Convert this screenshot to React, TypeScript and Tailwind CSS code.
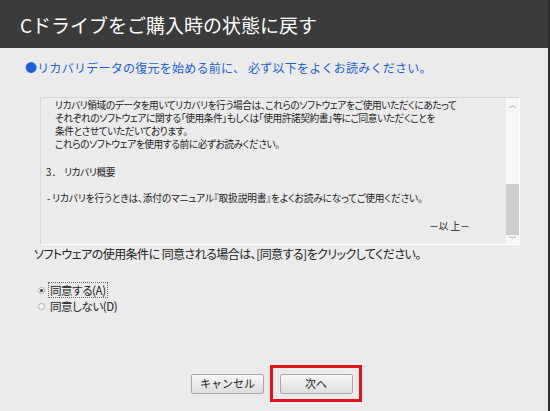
import React from "react";

const jp = { fontFamily: '"Noto Sans CJK JP", "Noto Sans", sans-serif' };

function Radio({ checked }: { checked?: boolean }) {
  return (
    <span className="flex h-[7px] w-[7px] items-center justify-center rounded-full border border-[#a8a8a8] bg-[#f8f8f8]">
      {checked && <span className="h-[3px] w-[3px] rounded-full bg-[#333]" />}
    </span>
  );
}

export default function App() {
  return (
    <div
      className="flex h-[411px] w-[550px] flex-col overflow-hidden border-r-2 border-[#2e2e2e] bg-[#ebebeb] text-[#222]"
      style={jp}
    >
      <div className="flex h-[48px] shrink-0 items-center bg-[#3b3b3b] pl-[20px]">
        <span className="text-[19px] leading-none text-white">Cドライブをご購入時の状態に戻す</span>
      </div>

      <div className="mt-[12px] pl-[25px] text-[12px] leading-[16px] tracking-[0.25px] text-[#1a5fd6]">
        ●リカバリデータの復元を始める前に、 必ず以下をよくお読みください。
      </div>

      <div className="ml-[40px] mt-[21px] flex h-[148px] w-[480px] shrink-0 border border-[#d6d6d6] border-b-white border-r-white">
        <div className="flex-1 overflow-hidden whitespace-nowrap pt-[1px] text-[9.7px] leading-[13px] tracking-[-0.42px] text-[#222] [font-feature-settings:'palt']">
          <div className="pl-[14px]">
            <div>リカバリ領域のデータを用いてリカバリを行う場合は、これらのソフトウェアをご使用いただくにあたって</div>
            <div>それぞれのソフトウェアに関する「使用条件」もしくは「使用許諾契約書」等にご同意いただくことを</div>
            <div>条件とさせていただいております。</div>
            <div>これらのソフトウェアを使用する前に必ずお読みください。</div>
          </div>
          <div className="mt-[15px] pl-[5px]">
            <span className="tracking-normal [font-feature-settings:normal]">3．</span>
            <span className="pl-[3px]">リカバリ概要</span>
          </div>
          <div className="mt-[13px] pl-[6px] tracking-[-0.15px]">-&nbsp;リカバリを行うときは、添付のマニュアル『取扱説明書』をよくお読みになってご使用ください。</div>
          <div className="mt-[15px] flex justify-end pr-[36px] tracking-normal [font-feature-settings:normal]">
            －以&nbsp;上－
          </div>
        </div>
        <div className="flex w-[13px] flex-col items-center bg-[#f7f7f7]">
          <span className="mt-[1px] text-[7px] leading-[10px] text-[#777]">︿</span>
          <div className="flex-1" />
          <div className="h-[51px] w-full bg-[#cdcdcd]" />
          <span className="text-[7px] leading-[9px] text-[#777]">﹀</span>
        </div>
      </div>

      <div className="whitespace-nowrap pl-[34px] text-[12px] leading-[18px] tracking-[-0.55px] text-[#222] [font-feature-settings:'palt']">
        ソフトウェアの使用条件に 同意される場合は、[同意する]をクリックしてください。
      </div>

      <div className="mt-[19px] flex flex-col pl-[38px] text-[11.5px] leading-[16px] tracking-[-0.4px] [font-feature-settings:'palt']">
        <label className="flex items-center gap-[3px]">
          <Radio checked />
          <span className="border border-dotted border-[#666] px-[1px] leading-[14px]">同意する(A)</span>
        </label>
        <label className="flex items-center gap-[4px]">
          <Radio />
          <span className="px-[1px]">同意しない(D)</span>
        </label>
      </div>

      <div className="mt-[51px] flex items-center pl-[191px]">
        <button className="h-[20px] w-[73px] rounded-[2px] border border-[#a9a9a9] bg-gradient-to-b from-[#f6f6f6] to-[#dedede] text-[11px] leading-none text-[#222]">
          キャンセル
        </button>
        <div className="ml-[6px] flex h-[37px] w-[92px] items-center justify-center border-[3px] border-[#e1141c]">
          <button className="h-[20px] w-[73px] rounded-[2px] border border-[#a9a9a9] bg-gradient-to-b from-[#f6f6f6] to-[#dedede] text-[11px] leading-none text-[#222]">
            次へ
          </button>
        </div>
      </div>
    </div>
  );
}
